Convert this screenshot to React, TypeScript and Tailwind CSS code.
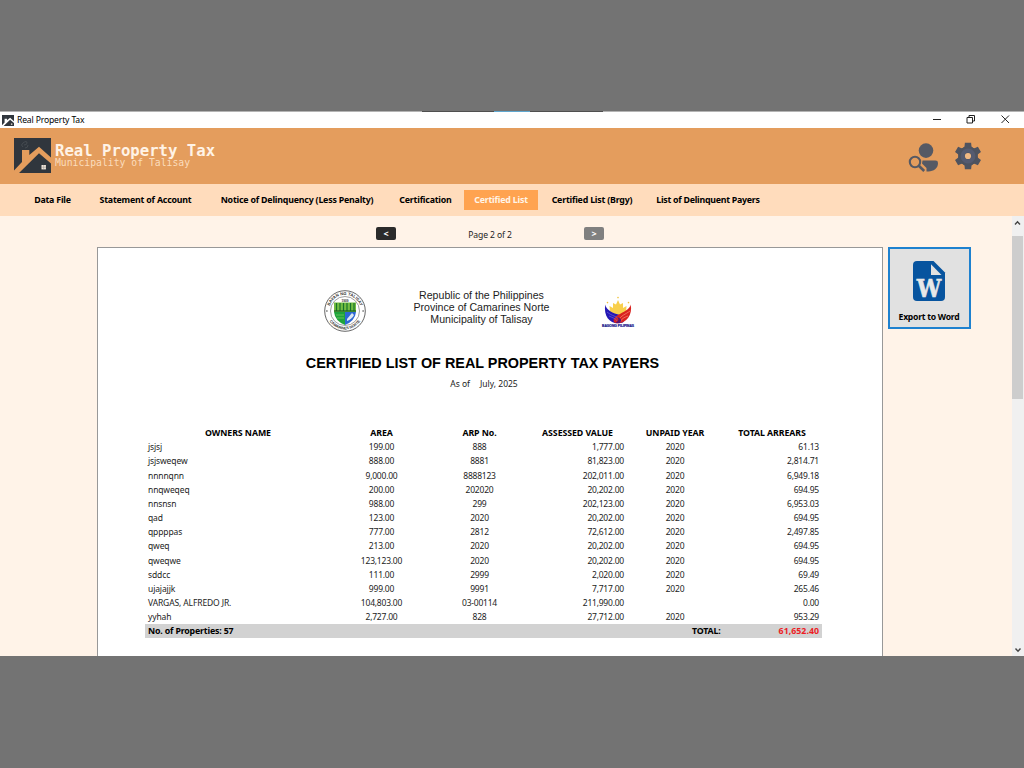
import React from "react";

const rows: string[][] = [
  ["jsjsj", "199.00", "888", "1,777.00", "2020", "61.13"],
  ["jsjsweqew", "888.00", "8881", "81,823.00", "2020", "2,814.71"],
  ["nnnnqnn", "9,000.00", "8888123", "202,011.00", "2020", "6,949.18"],
  ["nnqweqeq", "200.00", "202020", "20,202.00", "2020", "694.95"],
  ["nnsnsn", "988.00", "299", "202,123.00", "2020", "6,953.03"],
  ["qad", "123.00", "2020", "20,202.00", "2020", "694.95"],
  ["qppppas", "777.00", "2812", "72,612.00", "2020", "2,497.85"],
  ["qweq", "213.00", "2020", "20,202.00", "2020", "694.95"],
  ["qweqwe", "123,123.00", "2020", "20,202.00", "2020", "694.95"],
  ["sddcc", "111.00", "2999", "2,020.00", "2020", "69.49"],
  ["ujajajjk", "999.00", "9991", "7,717.00", "2020", "265.46"],
  ["VARGAS, ALFREDO JR.", "104,803.00", "03-00114", "211,990.00", "", "0.00"],
  ["yyhah", "2,727.00", "828", "27,712.00", "2020", "953.29"],
];

const grid = "grid grid-cols-[186px_101px_95px_101px_94px_100px] items-center whitespace-nowrap";

function HouseLogo({ className, bg }: { className: string; bg: string }) {
  return (
    <svg viewBox="0 0 37 35" className={className} preserveAspectRatio="none">
      <rect width="37" height="35" fill="#30363d" />
      <path d="M0 32.5 L8 24 V12 H15.3 V17 L25 8.8 L37 19.5 V25.5 L25 15.2 L5 35 H0 Z" fill={bg} />
      <path d="M9 9 q-3 -2 0 -4 q4 -3 4 0 q0 2 -3 2 M11 10 q3 0 3 -3" fill="none" stroke="#4b5056" strokeWidth="0.8" />
      <rect x="27.5" y="27" width="4.4" height="4.4" fill="#f3e8dc" />
      <path d="M29.7 27 V31.4 M27.5 29.2 H31.9" stroke="#8d8b88" strokeWidth="0.5" />
    </svg>
  );
}

function UserSearch() {
  return (
    <svg viewBox="0 0 30 30" className="h-[30px] w-[30px]">
      <circle cx="18" cy="8.6" r="7.3" fill="#555964" />
      <path d="M14.5 18.6 H27.5 Q30 18.6 30 21 C30 26.5 25.5 29.4 20.5 29.4 H18.5 V26 L14 21.5 Z" fill="#555964" />
      <circle cx="7" cy="20" r="5.2" fill="none" stroke="#555964" strokeWidth="2.1" />
      <path d="M10.8 23.8 L16.2 29" stroke="#555964" strokeWidth="2.6" />
    </svg>
  );
}

function Gear() {
  return (
    <svg viewBox="-14 -14 28 28" className="h-7 w-7">
      <g fill="#4e535f">
        <circle r="9.8" />
        {[0, 60, 120, 180, 240, 300].map((a) => (
          <path key={a} d="M-5 -8 L-3.5 -9.5 L-3.1 -13.2 H3.1 L3.5 -9.5 L5 -8 Z" transform={`rotate(${a})`} />
        ))}
      </g>
      <circle r="5.4" fill="none" stroke="#555b70" strokeWidth="4" />
      <circle r="3.1" fill="#f0b983" />
    </svg>
  );
}

function WordIcon() {
  return (
    <svg viewBox="0 0 32 40" className="h-10 w-8 overflow-visible">
      <path d="M4 0 H20.5 L32 11.5 V36 Q32 40 28 40 H4 Q0 40 0 36 V4 Q0 0 4 0 Z" fill="#07549f" />
      <path d="M18 3.3 L28.5 14 H18 Z" fill="#e1e1e1" />
      <text x="16" y="36" textAnchor="middle" textLength="24.5" lengthAdjust="spacingAndGlyphs" fill="#e8e8e8" stroke="#e8e8e8" strokeWidth="0.6" className="font-['DejaVu_Serif',serif] text-[24.5px] font-bold">W</text>
    </svg>
  );
}

function Seal() {
  return (
    <svg viewBox="0 0 42 42" className="h-[42px] w-[42px]">
      <defs>
        <path id="top" d="M5 21 A16 16 0 0 1 37 21" />
        <path id="bottom" d="M2.6 21 A18.4 18.4 0 0 0 39.4 21" />
      </defs>
      <circle cx="21" cy="21" r="20.3" fill="#fff" stroke="#666" strokeWidth="1" />
      <circle cx="21" cy="21" r="14.5" fill="#fff" stroke="#777" strokeWidth="0.7" />
      <text className="font-['Liberation_Sans',sans-serif] text-[4.2px] font-bold" fill="#333">
        <textPath href="#top" startOffset="50%" textAnchor="middle" textLength="40">BAYAN NG TALISAY</textPath>
      </text>
      <text className="font-['Liberation_Sans',sans-serif] text-[3.8px] font-bold" fill="#333">
        <textPath href="#bottom" startOffset="50%" textAnchor="middle" textLength="36">CAMARINES NORTE</textPath>
      </text>
      <text x="21" y="11.7" textAnchor="middle" fill="#333" className="font-['Liberation_Sans',sans-serif] text-[3.2px] font-bold">1909</text>
      <path d="M10 12.5 H32 V22 H10 Z" fill="#74bd42" />
      <path d="M12.5 13 V21 M16 13 V21 M19.5 13 V21 M23 13 V21 M26.5 13 V21 M30 13 V21" stroke="#16732c" strokeWidth="1.2" />
      <path d="M10 21 H32" stroke="#176024" strokeWidth="1.2" />
      <path d="M10 22 H21 V35 Q11 31 10 22 Z" fill="#1ea43b" />
      <path d="M21 22 H32 Q31 31 21 35 Z" fill="#2c68d4" />
      <path d="M12 25 H20 M13 28 H20" stroke="#77c861" strokeWidth="0.8" />
      <path d="M23 29 L28 23 L30 25 Q28 29 23 31 Z" fill="#dbe8f4" />
      <circle cx="2.9" cy="21" r="0.7" fill="#333" />
      <circle cx="39.1" cy="21" r="0.7" fill="#333" />
    </svg>
  );
}

function Bagong() {
  return (
    <svg viewBox="0 0 34 34" className="h-[34px] w-[34px]">
      <path d="M9 17 L8.5 10 L12 12 L12 7 L15 8.5 L17 4 L19 8.5 L22 7 L22 12 L25.5 10 L25 17 L20 21 H14 Z" fill="#f8cf4c" />
      <circle cx="17" cy="1.6" r="0.8" fill="#f0c23c" />
      <circle cx="6.5" cy="6.6" r="0.8" fill="#f0c23c" />
      <circle cx="27.5" cy="6.6" r="0.8" fill="#f0c23c" />
      <path d="M4.3 8.5 C5 14 12 17.5 19 19 C23 20 25 23 22 26.5 C11 30 2 22 4.3 8.5 Z" fill="#2418b5" />
      <path d="M29.7 8.5 C29 13.5 22 16 17 19 C13 21.5 11 24.5 14 27 C24 29 32 20 29.7 8.5 Z" fill="#d9231f" />
      <path d="M6 16 C11 20 16 20.5 18 23 M8 20 C12 22 15 22.5 16 25" fill="none" stroke="#7063d6" strokeWidth="0.7" />
      <path d="M29 15 C25 18 19 20 18 24 M27 20 C23 21.5 20 23 19.5 26" fill="none" stroke="#fa8a77" strokeWidth="0.7" />
      <path d="M16 21 C20 22 21 24 19 27 L14 27 C18 25 18 23 16 21 Z" fill="#571572" />
      <text x="17" y="31" textAnchor="middle" textLength="32" lengthAdjust="spacingAndGlyphs" fill="#15158a" stroke="#15158a" strokeWidth="0.2" className="font-['Liberation_Sans',sans-serif] text-[3.3px] font-bold">BAGONG PILIPINAS</text>
    </svg>
  );
}

function Nav({ slot, label }: { slot: string; label: string }) {
  return (
    <div className={`flex h-5 shrink-0 items-center justify-center whitespace-nowrap pt-px ${slot}`}>
      <span>{label}</span>
    </div>
  );
}

export default function App() {
  return (
    <div className="flex h-screen w-screen flex-col overflow-hidden bg-[#737373] pt-[111px] font-['Noto_Sans',sans-serif] text-[8.3px] text-[#1c1c1c]">
      <div className="flex h-[545px] flex-col overflow-hidden bg-[#fff3e8]">
        <div className="flex h-px shrink-0 bg-[#b4b4b4]">
          <div className="ml-[422px] w-[72px] bg-[#4f4f4f]" />
          <div className="w-9 bg-[#5fa7cf]" />
          <div className="w-[73px] bg-[#4f4f4f]" />
        </div>
        <div className="flex h-4 shrink-0 items-center bg-white pl-[2px]">
          <HouseLogo className="h-[11px] w-[12px]" bg="#fff" />
          <span className="ml-[3px] pt-px text-[8.6px] tracking-[-0.16px] text-black">Real Property Tax</span>
          <svg viewBox="0 0 80 12" className="ml-auto mr-[11px] h-3 w-20" fill="none" stroke="#222" strokeWidth="1">
            <path d="M0 5.5 H8" />
            <path d="M34 3.5 H39.5 V9 H34 Z M36 3.5 V1.5 H41.5 V7 H39.5" />
            <path d="M68.5 1.5 L76 9 M76 1.5 L68.5 9" />
          </svg>
        </div>
        <header className="flex h-14 shrink-0 items-start bg-[#e49d5d] pl-[14px]">
          <HouseLogo className="mt-[10px] h-[35px] w-[37px]" bg="#e49d5d" />
          <div className="ml-1 mt-[15px] whitespace-nowrap font-['DejaVu_Sans_Mono',monospace] text-[#fff3e6]">
            <div className="text-[15.65px] font-bold leading-[16px]">Real Property Tax</div>
            <div className="-mt-px text-[9.75px] leading-[9px] text-[#fbdcbc]">Municipality of Talisay</div>
          </div>
          <div className="ml-auto mr-[42px] mt-[14px] flex gap-4">
            <UserSearch />
            <Gear />
          </div>
        </header>
        <nav className="flex h-8 shrink-0 items-center bg-[#ffdcbc] text-[8.8px] font-bold tracking-[-0.19px] text-black">
          <Nav slot="ml-8 w-[41px]" label="Data File" />
          <Nav slot="ml-[22px] w-[101px]" label="Statement of Account" />
          <Nav slot="ml-[21px] w-40" label="Notice of Delinquency (Less Penalty)" />
          <Nav slot="ml-[18px] w-[61px]" label="Certification" />
          <Nav slot="ml-2 w-[74px] bg-[#ffa350] text-[#fff5e8]" label="Certified List" />
          <Nav slot="ml-[9px] w-[90px]" label="Certified List (Brgy)" />
          <Nav slot="ml-[15px] w-[112px] tracking-[-0.25px]" label="List of Delinquent Payers" />
        </nav>
        <div className="flex min-h-0 flex-1">
          <main className="ml-[97px] flex w-[786px] shrink-0 flex-col">
            <div className="flex h-[31px] shrink-0 items-start pl-[279px] pt-[11px]">
              <button className="flex h-[13px] w-5 items-center justify-center rounded-[2px] bg-[#2b2b2b] text-[9px] font-bold leading-none text-white">&lt;</button>
              <span className="ml-[72px] w-11 whitespace-nowrap text-center text-[8.6px] leading-[16.5px] tracking-[-0.1px]">Page 2 of 2</span>
              <button className="ml-[72px] flex h-[13px] w-5 items-center justify-center rounded-[2px] bg-[#808080] text-[9px] font-bold leading-none text-white">&gt;</button>
            </div>
            <section className="flex flex-1 flex-col border border-b-0 border-[#989898] bg-white">
              <div className="flex h-[107px] shrink-0 pl-[226px] pt-[42px]">
                <Seal />
                <div className="-mt-px ml-[40px] w-[151px] whitespace-nowrap text-center font-['Liberation_Sans',sans-serif] text-[10.6px] leading-[12px]">
                  <div>Republic of the Philippines</div>
                  <div>Province of Camarines Norte</div>
                  <div>Municipality of Talisay</div>
                </div>
                <div className="ml-[44px] mt-[6px]"><Bagong /></div>
              </div>
              <h1 className="mr-[15px] whitespace-nowrap text-center font-['Liberation_Sans',sans-serif] text-[14.4px] font-bold leading-4 text-black">CERTIFIED LIST OF REAL PROPERTY TAX PAYERS</h1>
              <div className="mr-[12px] mt-[7px] flex h-3 items-center justify-center gap-[10px] text-[8.5px]">
                <span>As of</span>
                <span>July, 2025</span>
              </div>
              <div className="ml-[47px] mt-[37px] w-[677px]">
                <div className={`${grid} h-[13px] text-center text-[8.8px] font-bold tracking-[-0.08px] text-black`}>
                  <span>OWNERS NAME</span>
                  <span>AREA</span>
                  <span>ARP No.</span>
                  <span>ASSESSED VALUE</span>
                  <span>UNPAID YEAR</span>
                  <span>TOTAL ARREARS</span>
                </div>
                {rows.map((r) => (
                  <div key={r[0]} className={`${grid} h-[14.2px] pt-[0.9px] text-center text-[8.5px] tracking-[-0.22px]`}>
                    <span className="pl-[3px] text-left tracking-[-0.12px]">{r[0]}</span>
                    <span>{r[1]}</span>
                    <span>{r[2]}</span>
                    <span className="pr-1 text-right">{r[3]}</span>
                    <span>{r[4]}</span>
                    <span className="pr-[3px] text-right">{r[5]}</span>
                  </div>
                ))}
                <div className="flex h-[14px] items-center bg-[#d2d2d2] px-[3px] pt-px text-[8.8px] font-bold tracking-[-0.17px] text-black">
                  <span className="w-[544px]">No. of Properties: 57</span>
                  <span>TOTAL:</span>
                  <span className="ml-auto tracking-[0.02px] text-[#ed1c24]">61,652.40</span>
                </div>
              </div>
            </section>
          </main>
          <button className="ml-[5px] mt-[31px] flex h-[82px] w-[83px] shrink-0 flex-col items-center border-2 border-[#1e81cf] bg-[#e1e1e1] pr-px pt-3">
            <WordIcon />
            <span className="mt-[9px] whitespace-nowrap text-[8.6px] font-bold leading-[14px] tracking-[-0.25px] text-black">Export to Word</span>
          </button>
          <div className="ml-auto flex w-3 flex-col items-center bg-[#f0f0f0]">
            <svg viewBox="0 0 12 20" className="h-5 w-3" fill="none" stroke="#444" strokeWidth="1.4"><path d="M3 8.5 L5.5 5.7 L8 8.5" /></svg>
            <div className="mr-px h-[163px] w-[11px] bg-[#cdcdcd]" />
            <svg viewBox="0 0 12 12" className="mt-auto h-3 w-3" fill="none" stroke="#444" strokeWidth="1.4"><path d="M3.5 4.5 L6 7.3 L8.5 4.5" /></svg>
          </div>
        </div>
      </div>
    </div>
  );
}
